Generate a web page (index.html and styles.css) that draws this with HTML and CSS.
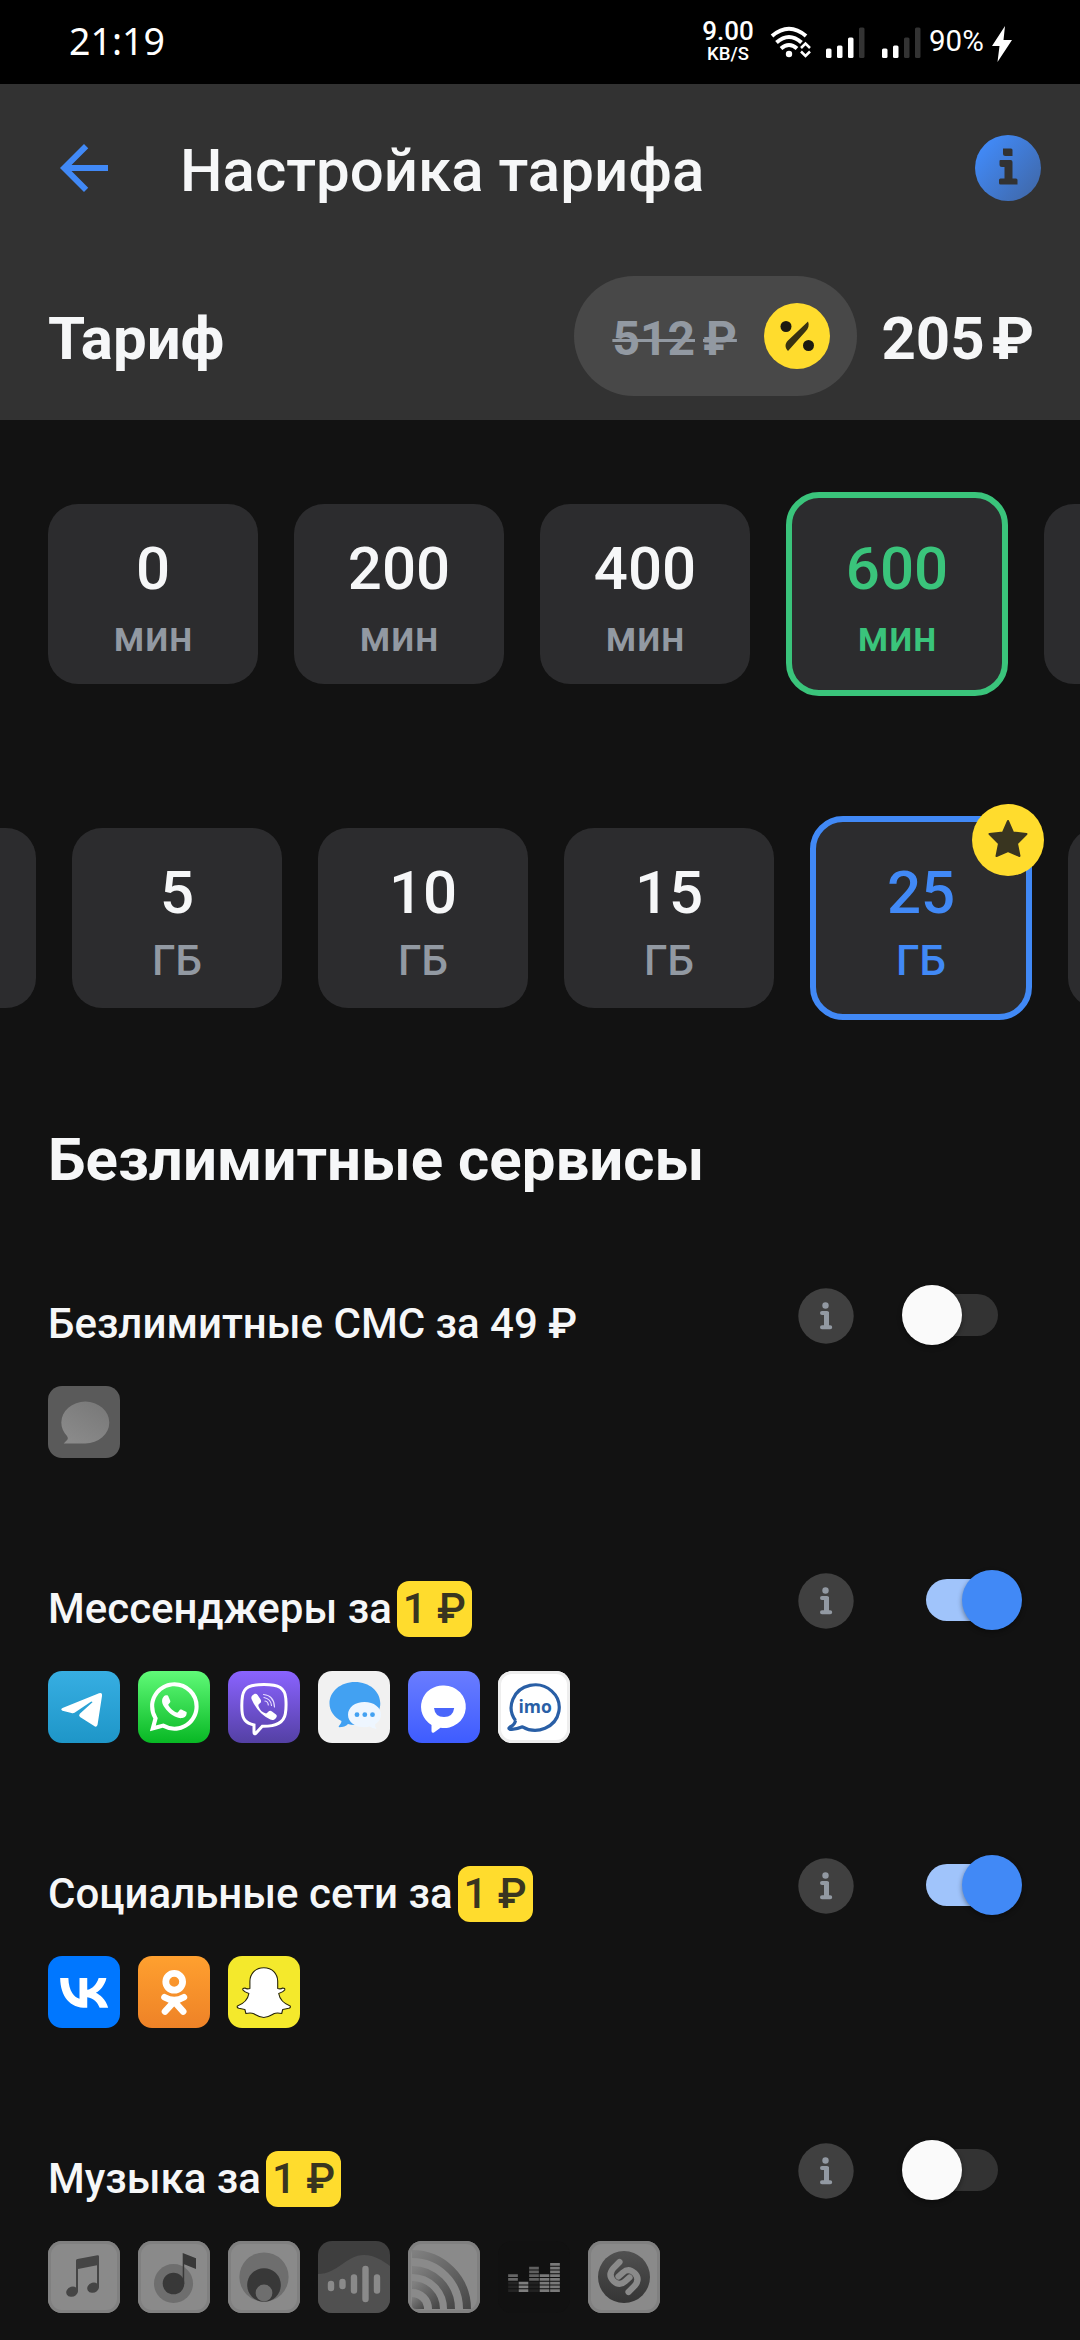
FILE: index.html
```html
<!DOCTYPE html>
<html lang="ru">
  <head>
    <meta charset="utf-8">
    <title>Настройка тарифа</title>
    <link rel="stylesheet" href="styles.css">
  </head>
  <body>
    <svg class="defs" width="0" height="0">
      <symbol id="info" viewBox="0 0 56 56">
        <circle cx="28" cy="28" r="27.7" fill="#404040"/>
        <circle cx="27.5" cy="17.5" r="3.2" fill="#9299a2"/>
        <path d="M24 25h5v14.2M24 39.2h8.2" fill="none" stroke="#9299a2" stroke-width="4" stroke-linecap="round" stroke-linejoin="round"/>
        <path d="M26 24h5v16h-5z" fill="#9299a2"/>
      </symbol>
      <linearGradient id="gBlue" x1="0.1" y1="0.2" x2="0.9" y2="0.9"><stop offset="0" stop-color="#4189f6"/><stop offset="1" stop-color="#4069ab"/></linearGradient>
      <linearGradient id="gSms" x1="1" y1="0" x2="0.3" y2="1"><stop offset="0" stop-color="#777"/><stop offset="1" stop-color="#8a8a8a"/></linearGradient>
      <linearGradient id="gArc" x1="0" y1="0" x2="1" y2="1"><stop offset="0" stop-color="#808080"/><stop offset="1" stop-color="#484848"/></linearGradient>
      <linearGradient id="gDark" x1="0" y1="0" x2="0" y2="1"><stop offset="0" stop-color="#505050"/><stop offset="1" stop-color="#353535"/></linearGradient>
    </svg>

    <div class="statusbar">
      <span class="time">21:19</span>
      <div class="status-icons">
        <div class="speed"><b>9.00</b><small>KB/S</small></div>
        <svg class="wifi" width="42" height="32" viewBox="0 0 42 32">
          <g fill="none" stroke="#fff" stroke-width="4">
            <path d="M2 10Q19 -4.500 36 10"/>
            <path d="M6.500 16.500Q19 5.500 31.500 16.500"/>
            <path d="M11 22.500Q19 15.500 27 22.500"/>
          </g>
          <circle cx="19" cy="28" r="3.200" fill="#fff"/>
          <path d="M31 22l4.500-4.500 4.500 4.500M31 25.500l4.500 4.500 4.500-4.500" fill="none" stroke="#fff" stroke-width="2.500"/>
        </svg>
        <svg class="signal" width="39" height="31" viewBox="0 0 39 31">
          <g fill="#fff"><rect y="21.500" width="5.500" height="9.500" rx="1.500"/><rect x="11" y="18.500" width="5.500" height="12.500" rx="1.500"/><rect x="22" y="10.500" width="5.500" height="20.500" rx="1.500"/></g>
          <rect x="33" y="0.500" width="5.500" height="30.500" rx="1.500" fill="#333"/>
        </svg>
        <svg class="signal second" width="39" height="31" viewBox="0 0 39 31">
          <g fill="#fff"><rect y="21.500" width="5.500" height="9.500" rx="1.500"/><rect x="11" y="18.500" width="5.500" height="12.500" rx="1.500"/></g>
          <g fill="#333"><rect x="22" y="10.500" width="5.500" height="20.500" rx="1.500"/><rect x="33" y="0.500" width="5.500" height="30.500" rx="1.500"/></g>
        </svg>
        <span class="battery">90%</span>
        <svg width="20" height="36" viewBox="0 0 20 36"><path d="M13 0L0 20h7.500L5.500 36 20 14h-8.500z" fill="#fff"/></svg>
      </div>
    </div>

    <header class="header">
      <div class="titlebar">
        <svg class="back" width="72" height="72" viewBox="0 0 24 24"><path d="M20 11H7.830l5.590-5.590L12 4l-8 8 8 8 1.410-1.410L7.830 13H20v-2z" fill="#4189f6"/></svg>
        <h1>Настройка тарифа</h1>
        <svg class="help" width="66" height="66" viewBox="0 0 66 66">
          <circle cx="33" cy="33" r="33" fill="url(#gBlue)"/>
          <path d="M28 13.500h8a1.500 1.500 0 0 1 1.500 1.500v6h-7a2.500 2.500 0 0 1-2.500-2.500zM25.500 25H35.500a2 2 0 0 1 2 2V43.500H41a1.500 1.500 0 0 1 1.500 1.500v4.500H25.500a1.500 1.500 0 0 1-1.500-1.500v-3a1.500 1.500 0 0 1 1.500-1.500h4V32h-2.500a2.500 2.500 0 0 1-2.500-2.500V26a1 1 0 0 1 1-1z" fill="#323232"/>
        </svg>
      </div>
      <div class="tariff">
        <h2>Тариф</h2>
        <div class="old-price">
          <span class="num">512</span><span class="rub">₽</span>
          <svg width="66" height="66" viewBox="0 0 66 66">
            <circle cx="33" cy="33" r="33" fill="#ffdc2d"/>
            <circle cx="22" cy="23.500" r="5.500" fill="#1c1a10"/>
            <circle cx="44.500" cy="42.500" r="5.500" fill="#1c1a10"/>
            <path d="M44 18.500c1.500 3.500 0.500 7-2.500 10L24 48c-3-3-3.500-7 0-10.500z" fill="#393211"/>
          </svg>
        </div>
        <div class="price">205<span>₽</span></div>
      </div>
    </header>

    <div class="chips minutes">
      <div class="chip"><b>0</b><span>мин</span></div>
      <div class="chip"><b>200</b><span>мин</span></div>
      <div class="chip"><b>400</b><span>мин</span></div>
      <div class="chip green"><b>600</b><span>мин</span></div>
      <div class="chip cut-right"></div>
    </div>

    <div class="chips traffic">
      <div class="chip cut-left"></div>
      <div class="chip"><b>5</b><span>ГБ</span></div>
      <div class="chip"><b>10</b><span>ГБ</span></div>
      <div class="chip"><b>15</b><span>ГБ</span></div>
      <div class="chip blue"><b>25</b><span>ГБ</span>
        <svg class="star" width="72" height="72" viewBox="0 0 72 72">
          <circle cx="36" cy="36" r="36" fill="#ffdc2d"/>
          <path d="M36 17l5 11.500 13.500 1.500-9.500 9.500 2.500 12.500L36 47l-11.500 5L27 39.500 17.500 30 31 28.500z" fill="#393520" stroke="#393520" stroke-width="2" stroke-linejoin="round"/>
        </svg>
      </div>
      <div class="chip cut-right"></div>
    </div>

    <h2 class="heading">Безлимитные сервисы</h2>

    <section class="service">
      <div class="service-row">
        <p>Безлимитные СМС за 49 ₽</p>
        <svg class="info"><use href="#info"/></svg>
        <div class="switch"></div>
      </div>
      <div class="apps">
        <svg class="app sms" viewBox="0 0 72 72"><path d="M37.300 57.400H15.700L19.500 53.500Q20.500 52 19 50C15.500 46 13.300 41.500 13.300 36.500A24 20.900 0 1 1 37.300 57.400z" fill="url(#gSms)"/></svg>
      </div>
    </section>

    <section class="service">
      <div class="service-row">
        <p>Мессенджеры за<em>1 ₽</em></p>
        <svg class="info"><use href="#info"/></svg>
        <div class="switch on"></div>
      </div>
      <div class="apps">
        <svg class="app telegram" viewBox="0 0 72 72"><path d="M14.500 37L51 22.300Q54.500 21.200 54 25L49.600 53.500Q49 57 45.800 54.800L32 46Q30.300 44.500 31.800 42.800L44.500 31.300Q44 30 42.500 30.900L26.500 41.800Q25 42.500 23.500 42L14.500 39.700Q12 38.300 14.500 37z" fill="#fff"/></svg>
        <svg class="app whatsapp" viewBox="0 0 72 72"><path transform="translate(11.800 11.200) scale(2.040)" fill="#fff" d="M17.472 14.382c-.297-.149-1.758-.867-2.030-.967-.273-.099-.471-.148-.670.150-.197.297-.767.966-.940 1.164-.173.199-.347.223-.644.075-.297-.150-1.255-.463-2.390-1.475-.883-.788-1.480-1.761-1.653-2.059-.173-.297-.018-.458.130-.606.134-.133.298-.347.446-.520.149-.174.198-.298.298-.497.099-.198.050-.371-.025-.520-.075-.149-.669-1.612-.916-2.207-.242-.579-.487-.500-.669-.510-.173-.008-.371-.010-.570-.010-.198 0-.520.074-.792.372-.272.297-1.040 1.016-1.040 2.479 0 1.462 1.065 2.875 1.213 3.074.149.198 2.096 3.200 5.077 4.487.709.306 1.262.489 1.694.625.712.227 1.360.195 1.871.118.571-.085 1.758-.719 2.006-1.413.248-.694.248-1.289.173-1.413-.074-.124-.272-.198-.570-.347m-5.421 7.403h-.004a9.870 9.870 0 0 1-5.031-1.378l-.361-.214-3.741.982.998-3.648-.235-.374a9.860 9.860 0 0 1-1.510-5.260c.001-5.450 4.436-9.884 9.888-9.884 2.640 0 5.122 1.030 6.988 2.898a9.825 9.825 0 0 1 2.893 6.994c-.003 5.450-4.437 9.884-9.885 9.884m8.413-18.297A11.815 11.815 0 0 0 12.050 0C5.495 0 .160 5.335.157 11.892c0 2.096.547 4.142 1.588 5.945L.057 24l6.305-1.654a11.882 11.882 0 0 0 5.683 1.448h.005c6.554 0 11.890-5.335 11.893-11.893a11.821 11.821 0 0 0-3.480-8.413z"/></svg>
        <svg class="app viber" viewBox="0 0 72 72">
          <path d="M36 13.500c15 0 21 3.500 21.800 14 .500 6 .300 11-.500 15.500-1.500 8.500-8.500 12.500-23 12.300l-6.500 7q-1.800 1.500-1.800-1V54C17.500 52 14.500 48 14 40c-.4-6-.3-10 .5-15C16 16 22 13.500 36 13.500z" fill="none" stroke="#fff" stroke-width="3"/>
          <path d="M26 23.300c1.200-.8 2.600-.6 3.600.7l3 4.500c.8 1.500.5 2.800-.6 3.700-1.500 1-2 1.600-1.300 3.500 1.300 3.300 3.500 5.600 6.600 6.600 1.300.3 2-.2 3.200-1.700 1-1 2.200-1 3.500-.2l4 3c1 1 1 2 .3 3-1.800 2.500-3.500 3.300-6 2.200C34 44.500 27.500 37.500 23.500 28c-.7-2 .5-3.700 2.500-4.700z" fill="#fff"/>
          <path d="M35.500 23.500q10.500 1 11 12.500M36 26.500q7 1.500 7.500 8M37 30q3 .5 3.300 4" fill="none" stroke="#e6dcff" stroke-width="1.200" stroke-linecap="round"/>
        </svg>
        <svg class="app chat" viewBox="0 0 72 72">
          <path d="M37 11C51.500 11 62.300 20.500 62.300 32.500S51 54 37 54q-4 0-7-1-3 3.300-9 3.300-1-1 .5-2 2-2 2-4.300C16 46 11.500 40 11.500 32.500 11.500 20.500 22.500 11 37 11z" fill="#42a1f2"/>
          <path d="M46.500 31C56 31 63 36.500 63 43.500q0 6-6 10 0 3 1.500 3.500.3.800-1 .8-3.500-.3-5.500-2.300-2.500.8-5.500.8C37 56.300 30 51 30 43.700S37 31 46.500 31z" fill="#eef6ff"/>
          <g fill="#42a1f2"><circle cx="39" cy="43.700" r="2.400"/><circle cx="46.800" cy="43.700" r="2.400"/><circle cx="54.500" cy="43.700" r="2.400"/></g>
        </svg>
        <svg class="app tamtam" viewBox="0 0 72 72"><path d="M36 14.500a21.700 21.300 0 1 1-3.500 42.300L26 61.500q-2.500 1-2.500-1.500V54A21.700 21.300 0 0 1 36 14.500z" fill="#fff"/><path d="M26 37h20.200Q45 46 36 46T26 37z" fill="#4a66fb"/></svg>
        <svg class="app imo" viewBox="0 0 72 72"><path d="M17.500 49.500A24 22.700 0 1 1 24.500 55.800Q17 59 12 58.300q-2.300-.8 0-2.300 5-2.500 5.500-6.500" fill="none" stroke="#295fa6" stroke-width="3.200" stroke-linejoin="round"/><text x="37.200" y="42" text-anchor="middle">imo</text></svg>
      </div>
    </section>

    <section class="service">
      <div class="service-row">
        <p>Социальные сети за<em>1 ₽</em></p>
        <svg class="info"><use href="#info"/></svg>
        <div class="switch on"></div>
      </div>
      <div class="apps">
        <svg class="app vk" viewBox="0 0 24 24"><path d="M12.770 17.290c-5.470 0-8.590-3.750-8.720-9.990h2.740c.090 4.580 2.110 6.520 3.710 6.920V7.300h2.580v3.950c1.580-.170 3.240-1.970 3.800-3.950h2.580c-.430 2.440-2.230 4.240-3.510 4.980 1.280.600 3.330 2.170 4.110 5.010h-2.840c-.610-1.900-2.130-3.370-4.140-3.570v3.570h-.310z" fill="#fff"/></svg>
        <svg class="app ok" viewBox="0 0 72 72"><g fill="none" stroke="#fff" stroke-linecap="round"><circle cx="36.200" cy="25.800" r="8.400" stroke-width="6.800"/><path d="M26.500 41.200q9.700 6 19.400 0M36.200 45.500L27 55.500M36.200 45.500l9 10" stroke-width="6.600"/></g></svg>
        <svg class="app snap" viewBox="0 0 72 72"><path d="M35.800 11.800c8.500 0 13.700 6 13.900 13.500v7.200q3 1 5-.5 2.500 0 2 2-1.500 2.200-6 3.500c1 6 5 10 11.500 12.500q.8 1.500-1.500 2.300-4 1-6 1.200l-1 4q-5-1-8 .200c-3.500 2-5.500 3.800-9.900 3.800s-6.400-1.800-9.900-3.800q-3-1.200-8-.2l-1-4q-2-.2-6-1.200-2.300-.8-1.500-2.300C16 47.500 19.900 43.500 20.900 37.500q-4.500-1.300-6-3.500-.5-2 2-2 2 1.500 5 .5v-7.200c.2-7.500 5.400-13.500 13.900-13.500z" fill="#fff" stroke="#26240a" stroke-width="1.100" stroke-linejoin="round"/></svg>
      </div>
    </section>

    <section class="service">
      <div class="service-row">
        <p>Музыка за<em>1 ₽</em></p>
        <svg class="info"><use href="#info"/></svg>
        <div class="switch"></div>
      </div>
      <div class="apps">
        <svg class="app gray" viewBox="0 0 72 72"><path d="M28 19.500Q28 18.300 29.500 18L49.500 14.200Q51 14 51 15.500V46a6 5 -20 1 1-2-3.500V24.200L30 28V50a6 5 -20 1 1-2-3.500z" fill="#454545"/></svg>
        <svg class="app gray" viewBox="0 0 72 72"><circle cx="35.500" cy="42.500" r="19.500" fill="#6e6e6e"/><circle cx="35.500" cy="42.500" r="10.800" fill="#383838"/><path d="M44.700 12L58 17.200V28L46.200 23.300V43h-1.500z" fill="#383838"/></svg>
        <svg class="app gray" viewBox="0 0 72 72"><circle cx="36" cy="36" r="24.600" fill="#6e6e6e"/><circle cx="36" cy="44" r="16.800" fill="#383838"/><circle cx="36" cy="52" r="8.400" fill="#6e6e6e"/></svg>
        <svg class="app wave" viewBox="0 0 72 72"><path d="M0 33C20 33 28 14 46 14 57 14 65 20 72 25V72H0z" fill="#505050"/><path d="M13 43v4M24.500 41v4M36 36.500v13M47.500 28v30M59 36.500v13" stroke="#8a8a8a" stroke-width="6.400" stroke-linecap="round"/></svg>
        <svg class="app gray" viewBox="0 0 72 72"><g fill="none" stroke="url(#gArc)" stroke-width="8"><path d="M4 13a55 55 0 0 1 55 55"/><path d="M4 29a39 39 0 0 1 39 39"/><path d="M4 44a24 24 0 0 1 24 24"/></g><path d="M4 56a12 12 0 0 1 12 12H8Q4 68 4 64z" fill="url(#gArc)"/></svg>
        <svg class="app deezer" viewBox="0 0 72 72"><g fill="none" stroke-width="9.700" stroke-dasharray="2.750 1">
          <path d="M15 51V40" stroke="#242424"/><path d="M15 39.750V33" stroke="#666"/>
          <path d="M25.500 51V40" stroke="#7e7e7e"/>
          <path d="M36 51V40" stroke="#222"/><path d="M36 39.750V25" stroke="#606060"/>
          <path d="M46.500 51V33" stroke="#7a7a7a"/>
          <path d="M57 51V22" stroke="#7a7a7a"/>
        </g></svg>
        <svg class="app gray" viewBox="0 0 72 72"><circle cx="36" cy="36" r="26" fill="url(#gDark)"/><g fill="none" stroke="#8a8a8a" stroke-width="6.200" stroke-linecap="round"><path d="M31.500 21L25.500 27Q19.500 34 25.500 40 31.500 45.500 37 40.500L41.500 36.500"/><path d="M40.500 51L46.500 45Q52.500 38 46.500 32 40.500 26.500 35 31.500L30.500 35.500"/></g></svg>
      </div>
    </section>
  </body>
</html>
```

FILE: styles.css
```css
* {
  box-sizing: border-box;
}
body {
  margin: 0;
  width: 1080px;
  height: 2340px;
  overflow: hidden;
  background: #121212;
  color: #f6f7f8;
  font-family: Roboto, sans-serif;
}
h1, h2, p {
  margin: 0;
}
svg {
  display: block;
  flex-shrink: 0;
}
.defs {
  position: absolute;
}

/* status bar */
.statusbar {
  display: flex;
  justify-content: space-between;
  height: 84px;
  padding: 0 68px 0 69px;
  background: #000;
  color: #fff;
}
.time {
  font-family: "Noto Sans", sans-serif;
  font-size: 37.5px;
  font-weight: 400;
  line-height: 82px;
}
.status-icons {
  display: flex;
  align-items: flex-start;
  padding-top: 26px;
}
.speed {
  display: flex;
  flex-direction: column;
  align-items: center;
  width: 52px;
  margin: -7px 16px 0 0;
}
.speed b {
  font-size: 26px;
  font-weight: 500;
  line-height: 24px;
}
.speed small {
  font-size: 18.5px;
  font-weight: 500;
  line-height: 22px;
}
.signal {
  margin: 1px 0 0 14px;
}
.signal.second {
  margin-left: 17px;
}
.battery {
  width: 59px;
  margin: -3px 4px 0 8px;
  font-size: 29.5px;
  line-height: 36px;
}

/* header */
.header {
  height: 336px;
  background: #323232;
}
.titlebar {
  display: flex;
  align-items: center;
  height: 168px;
  padding: 0 39px 0 48px;
}
.titlebar h1 {
  flex: 1;
  margin: 5px 0 0 60px;
  font-size: 60px;
  font-weight: 500;
}
.tariff {
  display: flex;
  align-items: center;
  height: 168px;
  padding: 0 46px 0 48px;
}
.tariff h2 {
  flex: 1;
  margin-top: 5px;
  font-size: 60px;
}
.old-price {
  display: flex;
  align-items: center;
  width: 283px;
  height: 120px;
  padding: 0 27px 0 38px;
  border-radius: 60px;
  background: #484848;
  color: #9299a2;
  font-size: 48px;
  font-weight: 700;
}
.old-price span {
  margin-top: 4px;
  text-decoration: line-through;
  text-decoration-thickness: 3px;
}
.old-price .rub {
  margin-left: 8px;
}
.old-price svg {
  margin-left: auto;
}
.price {
  margin: 5px 0 0 24px;
  font-size: 60px;
  font-weight: 700;
}
.price span {
  margin-left: 7px;
}

/* chips */
.chips {
  display: flex;
  align-items: center;
  gap: 36px;
  height: 204px;
}
.minutes {
  margin-bottom: 120px;
  margin-top: 72px;
  padding-left: 48px;
}
.chip {
  position: relative;
  display: flex;
  flex: 0 0 210px;
  flex-direction: column;
  align-items: center;
  height: 180px;
  padding-top: 30px;
  border-radius: 30px;
  background: #2c2c2e;
}
.chip b {
  font-size: 60px;
  font-weight: 500;
  line-height: 70px;
}
.chip span {
  margin-top: 8px;
  color: #9299a2;
  font-size: 42px;
  font-weight: 500;
  line-height: 50px;
}
.chip.green,
.chip.blue {
  flex-basis: 222px;
  height: 204px;
  padding-top: 36px;
  border: 6px solid #3ac47b;
  border-radius: 33px;
}
.chip.green b,
.chip.green span {
  color: #3ac47b;
}
.chip.blue {
  border-color: #4189f6;
}
.chip.blue b,
.chip.blue span {
  color: #4189f6;
}
/* chips scrolled partly out of the row */
.chip.cut-left,
.chip.cut-right {
  flex: 0 0 36px;
  overflow: hidden;
  background: none;
  border-radius: 0;
  padding: 0;
}
.chip.cut-right {
  flex: 1 0 0;
}
.chip.cut-left::before,
.chip.cut-right::before {
  content: "";
  width: 210px;
  height: 180px;
  flex-shrink: 0;
  border-radius: 30px;
  background: #2c2c2e;
}
.chip.cut-left {
  align-items: flex-end;
}
.chip.cut-right {
  align-items: flex-start;
}
.star {
  position: absolute;
  top: -18px;
  right: -18px;
}

/* services */
.heading {
  margin: 104px 0 89px 48px;
  font-size: 60px;
  line-height: 72px;
}
.service {
  height: 285px;
  padding: 0 58px 0 48px;
}
.service-row {
  display: flex;
  align-items: flex-start;
  height: 101px;
}
.service-row p {
  flex: 1;
  padding-top: 14px;
  font-size: 42px;
  font-weight: 500;
  line-height: 49px;
}
.service-row em {
  display: inline-block;
  width: 75px;
  height: 56px;
  margin-top: -4px;
  margin-left: 5px;
  border-radius: 12px;
  background: #ffdc2d;
  color: #393520;
  font-style: normal;
  line-height: 56px;
  text-align: center;
}
.info {
  width: 56px;
  height: 56px;
  margin: 3px 48px 0 0;
}
.switch {
  position: relative;
  width: 120px;
  height: 60px;
}
.switch::before {
  content: "";
  position: absolute;
  top: 9px;
  left: 24px;
  width: 72px;
  height: 42px;
  border-radius: 21px;
  background: #333;
}
.switch::after {
  content: "";
  position: absolute;
  left: 0;
  width: 60px;
  height: 60px;
  border-radius: 50%;
  background: #fafafa;
  box-shadow: 0 2px 5px rgba(0, 0, 0, 0.4);
}
.switch.on::before {
  background: #a0c4fb;
}
.switch.on::after {
  left: 60px;
  background: #4189f6;
}
.apps {
  display: flex;
  gap: 18px;
}
.app {
  width: 72px;
  height: 72px;
  border-radius: 14px;
}
.sms { background: #5a5a5a; }
.telegram { background: linear-gradient(#37aee2, #1e96c8); }
.whatsapp { background: linear-gradient(#60fa78, #08b824); }
.viber { background: linear-gradient(#8a63ff, #5440a4); }
.chat { background: #f1f1f1; }
.tamtam { background: linear-gradient(#6a7dff, #3e5cff); }
.imo {
  background: #fff;
  box-shadow: inset 0 0 0 3px #eee;
}
.imo text {
  fill: #295fa6;
  font-family: "Open Sans", sans-serif;
  font-size: 17.5px;
  font-weight: 700;
}
.vk { background: #07f; }
.ok { background: linear-gradient(#ffa02f, #ee8227); }
.snap { background: #f4e92c; }
.gray {
  background: #8a8a8a;
  box-shadow: inset 0 0 0 3px #808080;
}
.wave { background: #3e3e3e; }
.deezer { background: #111; }
```
